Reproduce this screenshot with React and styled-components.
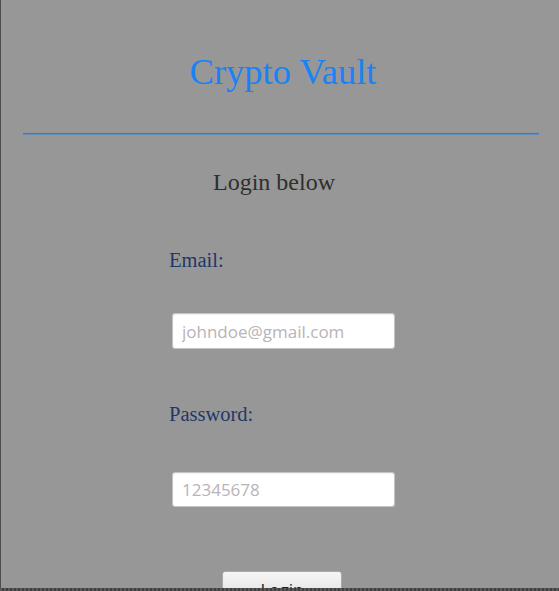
import React from "react";
import styled, { createGlobalStyle } from "styled-components";

const GlobalStyle = createGlobalStyle`
  html, body {
    margin: 0;
    padding: 0;
    background: repeating-linear-gradient(90deg, #5a5a5a 0 2px, #3f3f3f 2px 4px);
    overflow: hidden;
  }
`;

const Window = styled.div`
  width: 558px;
  height: 588px;
  border-left: 1px solid #4c4c4c;
  background: #979797;
  overflow: hidden;
  display: flex;
  flex-direction: column;
  font-family: "Liberation Serif", "Times New Roman", serif;

  & > * {
    flex-shrink: 0;
  }
`;

const Title = styled.h1`
  margin: 54px 0 0;
  padding-left: 6px;
  font-size: 36.5px;
  line-height: 36px;
  font-weight: normal;
  color: #1a82f5;
  text-align: center;
`;

const Divider = styled.div`
  height: 1px;
  margin: 43px 20px 0 22px;
  background: #1a80f2;
  box-shadow: 0 1px 0 rgba(31, 132, 238, 0.45);
`;

const Subtitle = styled.h2`
  margin: 36px 0 0 212px;
  font-size: 24px;
  line-height: 24px;
  font-weight: normal;
  color: #2f2f2f;
`;

const Form = styled.form`
  display: flex;
  flex-direction: column;
  align-items: flex-start;
  padding-left: 168px;

  & > * {
    flex-shrink: 0;
  }
`;

const Label = styled.label`
  margin-top: ${(p) => p.$gap}px;
  font-size: 20.5px;
  line-height: 20px;
  color: #1f3768;
`;

const Input = styled.input`
  box-sizing: border-box;
  width: 223px;
  height: ${(p) => p.$h}px;
  margin: ${(p) => p.$gap}px 0 0 3px;
  padding: 0 9px;
  border: 1px solid #c4c4c4;
  border-radius: 3px;
  background: #fff;
  box-shadow: inset 0 1px 2px rgba(0, 0, 0, 0.06);
  font-family: "Open Sans", "Noto Sans", sans-serif;
  font-size: 17px;
  color: #333;
  outline: none;

  &::placeholder {
    color: #b8b3b8;
  }
`;

const Button = styled.button`
  box-sizing: border-box;
  width: 120px;
  height: 32px;
  margin: 64px 0 0 53px;
  border: 1px solid #a9a9a9;
  border-radius: 3px;
  background: linear-gradient(#f6f6f6, #dedede);
  font-family: "Open Sans", "Noto Sans", sans-serif;
  font-size: 17px;
  color: #222;
  padding: 4px 0 0;
`;

export default function App() {
  return (
    <>
      <GlobalStyle />
      <Window>
        <Title>Crypto Vault</Title>
        <Divider />
        <Subtitle>Login below</Subtitle>
        <Form onSubmit={(e) => e.preventDefault()}>
          <Label $gap={56}>Email:</Label>
          <Input $gap={43} $h={36} type="email" placeholder="johndoe@gmail.com" />
          <Label $gap={55}>Password:</Label>
          <Input $gap={48} $h={35} type="password" placeholder="12345678" />
          <Button type="submit">Login</Button>
        </Form>
      </Window>
    </>
  );
}
